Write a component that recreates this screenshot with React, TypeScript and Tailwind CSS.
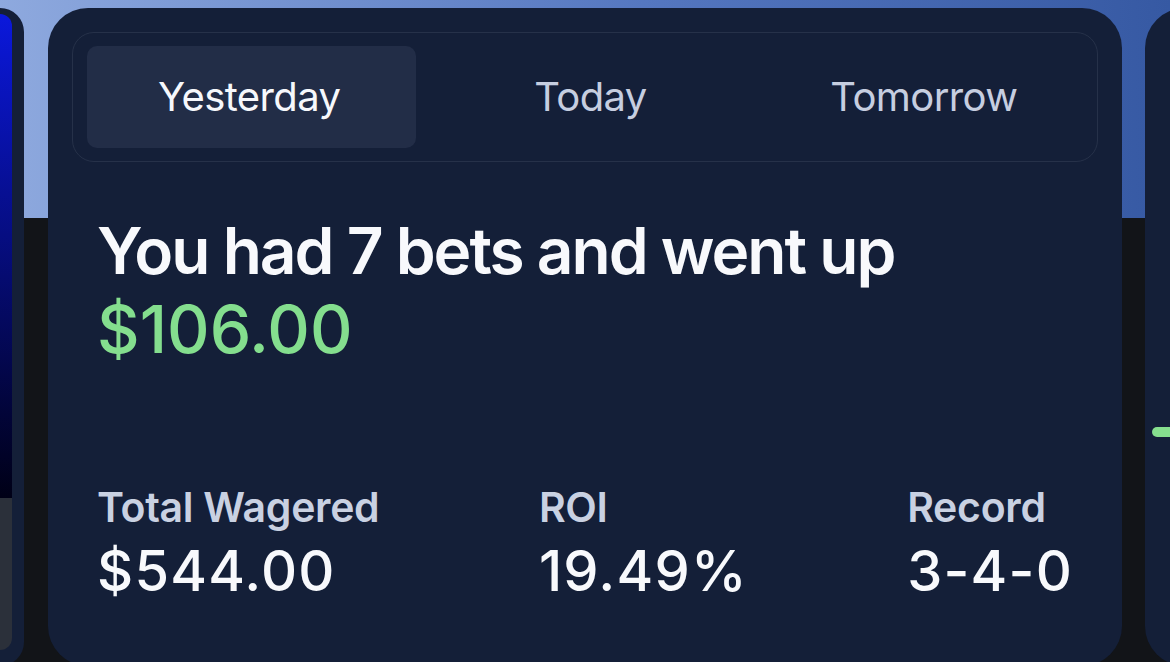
import React, { useState } from 'react'

const tabs = ['Yesterday', 'Today', 'Tomorrow'] as const

const stats = [
  { label: 'Total Wagered', value: '$544.00' },
  { label: 'ROI', value: '19.49%' },
  { label: 'Record', value: '3-4-0' },
]

export default function App() {
  const [active, setActive] = useState<(typeof tabs)[number]>('Yesterday')

  return (
    <div
      className="w-[1170px] h-[662px] overflow-hidden bg-[linear-gradient(to_bottom,transparent_218px,#121418_218px),linear-gradient(to_right,#8ea9de,#5577c0_55%,#3659a3)]"
      style={{ fontFamily: 'Inter, "Noto Sans", sans-serif' }}
    >
      <div className="flex items-start pt-2">
        {/* previous card, mostly off-screen */}
        <div className="flex-none w-[24px] h-[658px] rounded-r-[34px] bg-[#141f38] pt-[6px]">
          <div className="w-[12px] h-[636px] rounded-r-[12px] overflow-hidden flex flex-col">
            <div className="h-[484px] bg-[linear-gradient(to_bottom,#0b18dc,#000016)]" />
            <div className="flex-1 bg-[#2b303a]" />
          </div>
        </div>

        {/* main summary card */}
        <div className="flex-none ml-[24px] w-[1074px] h-[658px] rounded-[40px] bg-[#141f38] pt-[24px]">
          <div className="mx-[24px] h-[130px] rounded-[22px] border border-[#263149] px-[14px] py-[13px] grid grid-cols-3 gap-[4px]">
            {tabs.map((t) => {
              const on = t === active
              return (
                <button
                  key={t}
                  type="button"
                  onClick={() => setActive(t)}
                  className={
                    on
                      ? 'rounded-[10px] bg-[#222d47] pr-[5px] text-[40px] tracking-[-0.6px] text-[#f6f8fc] leading-none'
                      : 'rounded-[10px] pl-[11px] text-[40px] tracking-[-0.6px] text-[#c6cee0] leading-none'
                  }
                >
                  {t}
                </button>
              )
            })}
          </div>

          <div className="px-[49px]">
            <div className="mt-[50px] text-[64px] leading-[78px] font-semibold text-[#f8f9fc] tracking-[-2px] whitespace-nowrap">
              You had 7 bets and went up
            </div>
            <div className="text-[66px] leading-[78px] font-medium text-[#84de8e]">
              $106.00
            </div>

            <div className="mt-[115px] flex justify-between">
              {stats.map((s) => (
                <div key={s.label}>
                  <div className="text-[41px] leading-[49px] font-semibold text-[#c9d1e2] tracking-[-0.3px]">
                    {s.label}
                  </div>
                  <div className="mt-[7px] text-[56px] leading-[65px] font-medium text-[#f8f9fc] tracking-[1.2px]">
                    {s.value}
                  </div>
                </div>
              ))}
            </div>
          </div>
        </div>

        {/* next card peeking in */}
        <div className="flex-none ml-[23px] w-[60px] h-[658px] rounded-l-[40px] bg-[#141f38] pt-[419px] pl-[7px]">
          <div className="h-[10px] w-[40px] rounded-full bg-[#86df8e]" />
        </div>
      </div>
    </div>
  )
}
